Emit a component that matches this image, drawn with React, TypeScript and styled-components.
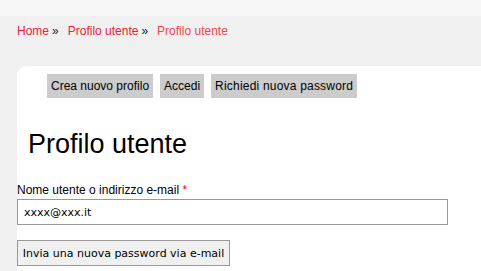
import React from 'react';
import styled, { createGlobalStyle } from 'styled-components';

const GlobalStyle = createGlobalStyle`
  html, body {
    margin: 0;
    padding: 0;
    background: #f0f0f0;
    font-family: 'Liberation Sans', Arial, sans-serif;
    overflow: hidden;
  }
`;

const TopStrip = styled.div`
  height: 16px;
  background: #f7f7f7;
`;

const Breadcrumb = styled.nav`
  display: flex;
  align-items: baseline;
  padding: 8px 0 0 17px;
  height: 50px;
  box-sizing: border-box;
  font-size: 12px;
  line-height: 15px;
`;

const Crumb = styled.a<{ $current?: boolean }>`
  color: ${(p) => (p.$current ? '#f0474f' : '#e8213a')};
  text-decoration: none;
`;

const Sep = styled.span`
  color: #1a1a2a;
  margin: 0 9px 0 3px;
`;

const Panel = styled.main`
  margin-left: 17px;
  background: #fff;
  border-top-left-radius: 9px;
  height: 210px;
`;

const Tabs = styled.ul`
  display: flex;
  gap: 7px;
  list-style: none;
  margin: 0;
  padding: 8px 0 0 30px;
`;

const Tab = styled.li<{ $wide?: boolean }>`
  background: #cccccc;
  color: #000;
  font-size: 12px;
  height: 24px;
  line-height: 24px;
  padding: 0 4px;
  letter-spacing: ${(p) => (p.$wide ? '0.2px' : '0')};
`;

const Title = styled.h1`
  margin: 0;
  padding: 31px 0 0 11px;
  font-size: 27px;
  font-weight: normal;
  line-height: 30px;
  color: #000;
`;

const Form = styled.form`
  padding-top: 24px;
`;

const Label = styled.label`
  display: block;
  font-size: 12px;
  line-height: 14px;
  color: #000;
`;

const Required = styled.span`
  color: #e00;
`;

const Input = styled.input`
  display: block;
  box-sizing: border-box;
  margin-top: 2px;
  width: 431px;
  height: 26px;
  border: 1px solid #999;
  padding: 0 6px;
  font-family: 'DejaVu Sans', Verdana, sans-serif;
  font-size: 11px;
  color: #000;
  outline: none;
`;

const Submit = styled.button`
  display: block;
  box-sizing: border-box;
  margin-top: 15px;
  height: 26px;
  width: 213px;
  border: 1px solid #999;
  background: #f0f0f0;
  font-family: 'DejaVu Sans', Verdana, sans-serif;
  font-size: 11px;
  color: #000;
  padding: 0;
`;

export default function App() {
  return (
    <>
      <GlobalStyle />
      <TopStrip />
      <Breadcrumb>
        <Crumb href="#">Home</Crumb>
        <Sep>»</Sep>
        <Crumb href="#">Profilo utente</Crumb>
        <Sep>»</Sep>
        <Crumb $current>Profilo utente</Crumb>
      </Breadcrumb>
      <Panel>
        <Tabs>
          <Tab>Crea nuovo profilo</Tab>
          <Tab>Accedi</Tab>
          <Tab $wide>Richiedi nuova password</Tab>
        </Tabs>
        <Title>Profilo utente</Title>
        <Form onSubmit={(e) => e.preventDefault()}>
          <Label htmlFor="name">
            Nome utente o indirizzo e-mail <Required>*</Required>
          </Label>
          <Input id="name" defaultValue="xxxx@xxx.it" />
          <Submit type="submit">Invia una nuova password via e-mail</Submit>
        </Form>
      </Panel>
    </>
  );
}
